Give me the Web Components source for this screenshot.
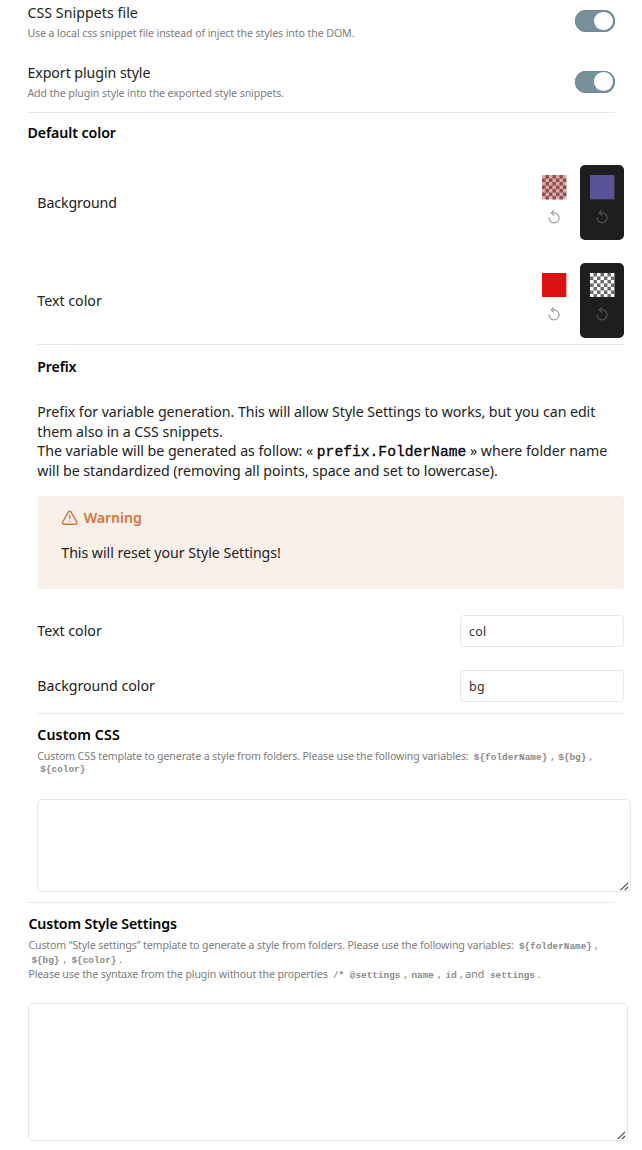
<!DOCTYPE html>
<html lang="en">
<head>
<meta charset="utf-8">
<title>Plugin settings</title>
<style>
html,body{margin:0;padding:0;background:#fff}
body{width:642px;height:1150px;overflow:hidden;font-family:"Noto Sans","Open Sans",sans-serif;color:#222}
</style>
</head>
<body>
<settings-page></settings-page>
<script>
const define = (name, html, init) => {
  const t = document.createElement('template');
  t.innerHTML = html;
  customElements.define(name, class extends HTMLElement {
    constructor() {
      super();
      this.attachShadow({mode: 'open'}).append(t.content.cloneNode(true));
    }
    connectedCallback() { if (init) init.call(this); }
  });
};

/* A piece of one-line text whose tracking is set so that it fills the width `w`. */
define('text-run', `<style>
:host{display:inline-block;white-space:pre;flex:none;font-size:14.2px;line-height:20px}
:host([kind=head]){font-weight:560;color:#000}
:host([kind=small]){font-size:10.6px;line-height:14px;color:#7c7c7c}
:host([kind=code]){font:bold 9.3px/14px "Liberation Mono",monospace;color:#8a8a8a}
:host([kind=mono]){font:14.6px/20px "Liberation Mono",monospace;color:#000;-webkit-text-stroke:.3px #000}
:host([kind=warn]){font-weight:560;color:#d9743f}
:host([kind=field]){font-size:12.4px}
</style><slot></slot>`, function () {
  const w = +this.getAttribute('w'), n = this.textContent.length;
  if (!w) return;
  this.style.letterSpacing = ((w - this.getBoundingClientRect().width) / n) + 'px';
});

define('text-line', `<style>
:host{display:flex;align-items:baseline;height:var(--h,20px)}
</style><slot></slot>`);

define('rule-line', `<style>:host{display:block;height:1px;background:#e9e9e9}</style>`);

define('toggle-switch', `<style>
:host{display:flex;justify-content:flex-end;align-items:center;box-sizing:border-box;width:40.5px;height:22px;border-radius:11px;background:#78909c;padding-right:2px;box-shadow:inset 0 0 1px .5px #6a808b}
i{width:18.6px;height:18.6px;border-radius:50%;background:#fff}
</style><i></i>`);

define('setting-item', `<style>
:host{display:flex;justify-content:space-between;align-items:flex-start}
div{display:flex;flex-direction:column;align-items:flex-start;gap:3px;padding-top:2.5px}
slot[name=control]{display:block;padding-top:10px}
</style><div><slot name="name"></slot><slot name="desc"></slot></div><slot name="control"></slot>`);

/* With two colours, --a and --b, the swatch shows a 7 by 7 checkerboard. */
define('color-picker', `<style>
:host{display:flex;flex-direction:column;align-items:center;box-sizing:border-box;width:44px;height:75px;padding-top:10px;border-radius:5px;color:#9a9a9a}
:host([dark]){background:#1e1e1e;color:#555}
.swatch{width:24.4px;height:24.4px;display:block}
.icon{margin-top:10.5px;display:block}
</style><svg class="swatch" viewBox="0 0 7 7"><rect width="7" height="7" style="fill:var(--a)"/><path style="stroke:var(--b,none)" stroke-width="1" stroke-dasharray="1 1" d="M1 .5H7M0 1.5H7M1 2.5H7M0 3.5H7M1 4.5H7M0 5.5H7M1 6.5H7"/></svg><svg class="icon" width="14" height="14" viewBox="0 0 24 24" fill="none" stroke="currentColor" stroke-width="2" stroke-linecap="round" stroke-linejoin="round"><path d="M3.5 13.5a8.6 8.6 0 1 0 8.6-8.6H8"/><path d="M11.3 1 7.2 4.9l4.1 3.9"/></svg>`);

define('color-row', `<style>
:host{display:flex;align-items:center;height:75px}
.name{flex:1}
.pick{display:flex;gap:4px}
</style><div class="name"><slot></slot></div><div class="pick"><slot name="pick"></slot></div>`);

define('warning-callout', `<style>
:host{display:block;box-sizing:border-box;height:92.8px;padding:12px 24px 0;border-radius:4px;background:#faf0ea}
.title{display:flex;align-items:center;gap:4.9px;height:20px;color:#d9743f}
.body{margin-top:14.7px;height:20px;display:flex}
</style><div class="title"><svg width="17.5" height="17.5" viewBox="0 0 24 24" fill="none" stroke="currentColor" stroke-width="1.9" stroke-linecap="round" stroke-linejoin="round"><path d="m21.73 18-8-14a2 2 0 0 0-3.48 0l-8 14A2 2 0 0 0 4 21h16a2 2 0 0 0 1.73-3Z"/><path d="M12 9v4M12 17h.01"/></svg><slot name="title"></slot></div><div class="body"><slot></slot></div>`);

define('field-row', `<style>
:host{display:flex;align-items:center;justify-content:space-between;height:32px}
.box{display:flex;align-items:center;box-sizing:border-box;width:164.5px;height:32px;border:1px solid #e8e8e8;border-radius:4px;padding:2px 0 0 8px;color:#333}
</style><slot></slot><div class="box"><slot name="value"></slot></div>`);

define('text-box', `<style>
:host{display:flex;justify-content:flex-end;align-items:flex-end;box-sizing:border-box;border:1px solid #e8e8e8;border-radius:5px;padding:0 1px 0 0}
</style><svg width="9" height="9" viewBox="0 0 9 9" fill="none" stroke="#444" stroke-width="1.1"><path d="M.6 8.2 8 .8M4.8 8.2 8 5"/></svg>`);

define('settings-page', `<style>
:host{display:block;width:642px;height:1150px}
section{display:flex;flex-direction:column}
.a{margin:0 27px 0 27.4px}
.b{margin:0 17.6px 0 37.3px}
.c{margin:0 27px 0 28.4px}
.lines{display:flex;flex-direction:column}
.s text-line{--h:14.5px}
</style>
<section class="a">
  <setting-item style="height:60.5px"><text-run slot="name" w="110.5">CSS Snippets file</text-run><text-run slot="desc" kind="small" w="327">Use a local css snippet file instead of inject the styles into the DOM.</text-run><toggle-switch slot="control"></toggle-switch></setting-item>
  <setting-item style="height:51.5px"><text-run slot="name" w="123">Export plugin style</text-run><text-run slot="desc" kind="small" w="256.5">Add the plugin style into the exported style snippets.</text-run><toggle-switch slot="control"></toggle-switch></setting-item>
  <rule-line></rule-line>
  <text-line style="margin-top:10.4px"><text-run kind="head" w="88.5">Default color</text-run></text-line>
</section>
<section class="b">
  <color-row style="margin-top:22px"><text-run w="79.5" style="margin-bottom:1px">Background</text-run>
    <color-picker slot="pick" style="--a:#dfaaaa;--b:#8d5050"></color-picker>
    <color-picker slot="pick" dark style="--a:#5a5398"></color-picker></color-row>
  <color-row style="margin-top:22.2px"><text-run w="64.5">Text color</text-run>
    <color-picker slot="pick" style="--a:#dd1111"></color-picker>
    <color-picker slot="pick" dark style="--a:#fff;--b:#6c6c6c"></color-picker></color-row>
  <rule-line style="margin-top:6.6px"></rule-line>
  <text-line style="margin-top:11.8px"><text-run kind="head" w="39">Prefix</text-run></text-line>
  <div class="lines" style="margin-top:25.4px;--h:19.5px">
    <text-line><text-run w="558">Prefix for variable generation. This will allow Style Settings to works, but you can edit</text-run></text-line>
    <text-line><text-run w="185.5">them also in a CSS snippets.</text-run></text-line>
    <text-line><text-run w="279.5">The variable will be generated as follow: « </text-run><text-run kind="mono" w="149.5">prefix.FolderName</text-run><text-run w="141"> » where folder name</text-run></text-line>
    <text-line><text-run w="460.5">will be standardized (removing all points, space and set to lowercase).</text-run></text-line>
  </div>
  <warning-callout style="margin-top:15.6px"><text-run slot="title" kind="warn" w="58">Warning</text-run><text-run w="219.5">This will reset your Style Settings!</text-run></warning-callout>
  <field-row style="margin-top:26.4px"><text-run w="64.5">Text color</text-run><text-run slot="value" kind="field" w="17.5">col</text-run></field-row>
  <field-row style="margin-top:22.8px"><text-run w="117.5">Background color</text-run><text-run slot="value" kind="field" w="16">bg</text-run></field-row>
  <rule-line style="margin-top:11.2px"></rule-line>
  <text-line style="margin-top:10.5px"><text-run kind="head" w="82.5">Custom CSS</text-run></text-line>
  <div class="lines s" style="margin-top:4px">
    <text-line><text-run kind="small" w="436.5">Custom CSS template to generate a style from folders. Please use the following variables:  </text-run><text-run kind="code" w="73.5">\${folderName}</text-run><text-run kind="small" w="11"> , </text-run><text-run kind="code" w="28">\${bg}</text-run><text-run kind="small" w="6"> ,</text-run></text-line>
    <text-line style="padding-left:3px"><text-run kind="code" w="45">\${color}</text-run></text-line>
  </div>
  <text-box style="margin-top:21.1px;width:593.5px;height:93px"></text-box>
</section>
<section class="c">
  <rule-line style="margin-top:10.3px"></rule-line>
  <text-line style="margin-top:11.4px"><text-run kind="head" w="148.5">Custom Style Settings</text-run></text-line>
  <div class="lines s" style="margin-top:3.2px">
    <text-line><text-run kind="small" w="490.5">Custom “Style settings” template to generate a style from folders. Please use the following variables:  </text-run><text-run kind="code" w="73">\${folderName}</text-run><text-run kind="small" w="6"> ,</text-run></text-line>
    <text-line style="padding-left:3px"><text-run kind="code" w="28">\${bg}</text-run><text-run kind="small" w="12"> , </text-run><text-run kind="code" w="45">\${color}</text-run><text-run kind="small" w="6"> .</text-run></text-line>
    <text-line><text-run kind="small" w="304.5">Please use the syntaxe from the plugin without the properties  </text-run><text-run kind="code" w="67.5">/* @settings</text-run><text-run kind="small" w="11"> , </text-run><text-run kind="code" w="22.5">name</text-run><text-run kind="small" w="11.5"> , </text-run><text-run kind="code" w="11.5">id</text-run><text-run kind="small" w="33"> , and  </text-run><text-run kind="code" w="45">settings</text-run><text-run kind="small" w="6"> .</text-run></text-line>
  </div>
  <text-box style="margin-top:22px;width:599.5px;height:137.5px"></text-box>
</section>`);
</script>
</body>
</html>
